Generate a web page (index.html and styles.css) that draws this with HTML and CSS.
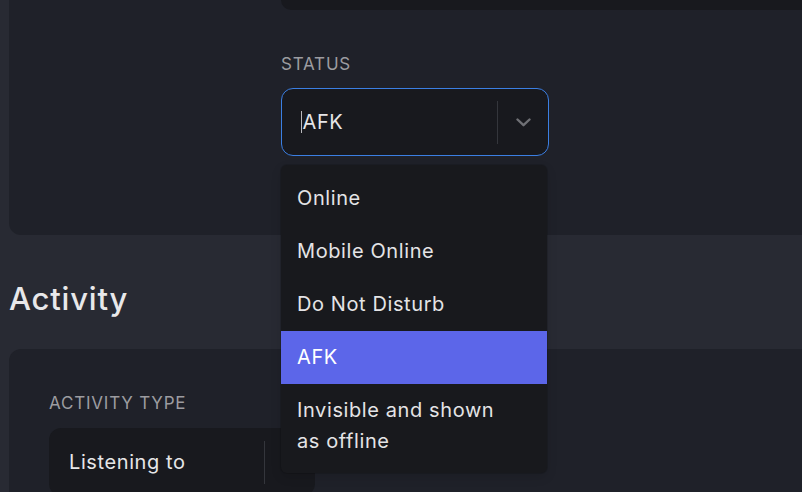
FILE: index.html
```html
<!DOCTYPE html>
<html lang="en">
<head>
<meta charset="utf-8">
<title>Status settings</title>
<link rel="stylesheet" href="styles.css">
</head>
<body>
<div class="page">
  <section class="card card-top">
    <div class="spacer"></div>
    <div class="col">
      <div class="textbox"></div>
      <div class="field status-field">
        <label class="label">STATUS</label>
        <div class="select focused">
          <div class="value"><span class="caret"></span>AFK</div>
          <div class="sep"></div>
          <div class="indicator">
            <svg width="15" height="9" viewBox="0 0 15 9"><path d="M1.5 1.5 L7.5 7.2 L13.5 1.5" fill="none" stroke="#6f7075" stroke-width="2.4" stroke-linecap="round" stroke-linejoin="round"/></svg>
          </div>
        </div>
        <ul class="menu">
          <li class="option">Online</li>
          <li class="option">Mobile Online</li>
          <li class="option">Do Not Disturb</li>
          <li class="option selected">AFK</li>
          <li class="option">Invisible and shown as offline</li>
        </ul>
      </div>
    </div>
  </section>

  <h2 class="heading">Activity</h2>

  <section class="card card-bottom">
    <div class="field">
      <label class="label">ACTIVITY TYPE</label>
      <div class="select">
        <div class="value">Listening to</div>
        <div class="sep"></div>
        <div class="indicator">
          <svg width="15" height="9" viewBox="0 0 15 9"><path d="M1.5 1.5 L7.5 7.2 L13.5 1.5" fill="none" stroke="#6f7075" stroke-width="2.4" stroke-linecap="round" stroke-linejoin="round"/></svg>
        </div>
      </div>
    </div>
  </section>
</div>
</body>
</html>
```

FILE: styles.css
```css
html, body {
  margin: 0;
  padding: 0;
  height: 100%;
  overflow: hidden;
  background: #282a33;
  font-family: Inter, "Liberation Sans", sans-serif;
  color: #e4e4e6;
}

.page {
  padding-left: 9px;
  margin-right: -30px;
}

.card {
  background: #1f2129;
  border-radius: 12px;
}

.card-top {
  margin-top: -60px;
  padding: 20px 0 79px 0;
  display: grid;
  grid-template-columns: 272px 1fr;
}

.col {
  display: flex;
  flex-direction: column;
}

.textbox {
  height: 50px;
  background: #18191e;
  border-radius: 10px;
}

.field {
  position: relative;
  display: flex;
  flex-direction: column;
  width: 268px;
}

.status-field {
  margin-top: 44px;
}

.label {
  font-size: 17px;
  line-height: 20px;
  color: #9c9ca0;
  letter-spacing: 0.8px;
  margin-bottom: 14px;
}

.select {
  box-sizing: border-box;
  height: 68px;
  background: #18191e;
  border-radius: 12px;
  display: flex;
  align-items: center;
}

.select.focused {
  border: 1.5px solid #3b7fe3;
}

.value {
  flex: 1;
  padding-left: 20px;
  font-size: 20px;
  letter-spacing: 0.6px;
  color: #e6e6e8;
  display: flex;
  align-items: center;
}

.focused .value {
  padding-left: 18.5px;
}

.caret {
  display: inline-block;
  width: 1px;
  height: 22px;
  background: #b9b9bd;
  margin-right: 1px;
}

.sep {
  width: 1px;
  height: 43px;
  background: #34363c;
}

.indicator {
  width: 50px;
  display: flex;
  align-items: center;
  justify-content: center;
}

.menu {
  position: absolute;
  top: 111px;
  left: 0;
  width: 266px;
  margin: 0;
  padding: 7px 0 5px 0;
  list-style: none;
  background: #18191d;
  border-radius: 6px;
  box-shadow: 0 0 0 1px rgba(0, 0, 0, 0.12), 0 4px 11px rgba(0, 0, 0, 0.12);
  z-index: 2;
}

.option {
  padding: 11px 30px 11px 16px;
  font-size: 20px;
  line-height: 31px;
  letter-spacing: 0.6px;
  color: #e4e4e6;
}

.option.selected {
  background: #5c66e9;
  color: #ffffff;
}

.heading {
  margin: 45px 0 31px 0;
  font-size: 31px;
  line-height: 38px;
  font-weight: 500;
  letter-spacing: 0.8px;
  color: #e8e8ea;
}

.card-bottom {
  padding: 44px 40px 40px 40px;
}

.card-bottom .field {
  width: 266px;
}

.card-bottom .label {
  margin-bottom: 15px;
}
```
